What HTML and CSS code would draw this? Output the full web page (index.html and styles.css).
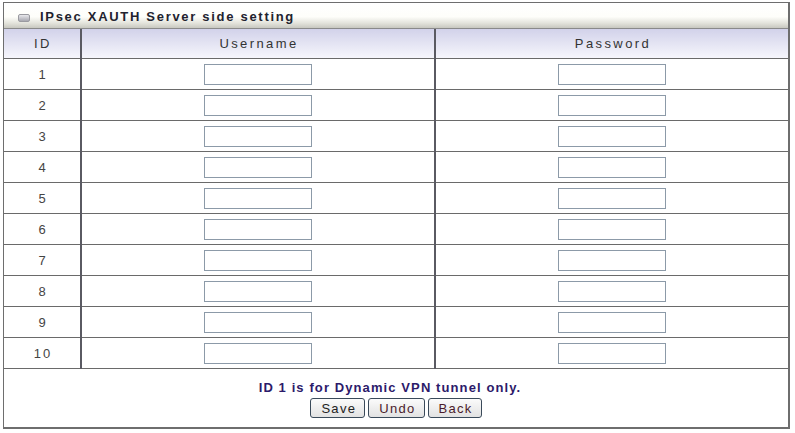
FILE: index.html
```html
<!DOCTYPE html>
<html>
<head>
<meta charset="utf-8">
<link rel="stylesheet" href="styles.css">
</head>
<body>
<div class="panel">
  <div class="title"><span class="ticon"></span>IPsec XAUTH Server side setting</div>
  <table class="grid">
    <tr class="head"><th class="cid">ID</th><th class="cuser">Username</th><th>Password</th></tr>
    <tr><td>1</td><td><input class="field" type="text"></td><td><input class="field" type="password"></td></tr>
    <tr><td>2</td><td><input class="field" type="text"></td><td><input class="field" type="password"></td></tr>
    <tr><td>3</td><td><input class="field" type="text"></td><td><input class="field" type="password"></td></tr>
    <tr><td>4</td><td><input class="field" type="text"></td><td><input class="field" type="password"></td></tr>
    <tr><td>5</td><td><input class="field" type="text"></td><td><input class="field" type="password"></td></tr>
    <tr><td>6</td><td><input class="field" type="text"></td><td><input class="field" type="password"></td></tr>
    <tr><td>7</td><td><input class="field" type="text"></td><td><input class="field" type="password"></td></tr>
    <tr><td>8</td><td><input class="field" type="text"></td><td><input class="field" type="password"></td></tr>
    <tr><td>9</td><td><input class="field" type="text"></td><td><input class="field" type="password"></td></tr>
    <tr><td>10</td><td><input class="field" type="text"></td><td><input class="field" type="password"></td></tr>
  </table>
  <div class="foot">
    <div class="note">ID 1 is for Dynamic VPN tunnel only.</div>
    <div class="btns">
      <button class="btn">Save</button><button class="btn red">Undo</button><button class="btn red">Back</button>
    </div>
  </div>
</div>
</body>
</html>
```
FILE: styles.css
```css
html, body { margin: 0; padding: 0; background: #fff; }
body { font-family: "Liberation Sans", Arial, sans-serif; font-size: 13px; color: #333; }
.panel {
  margin: 2px 0 0 3px;
  width: 784px;
  border: 1px solid #6e6e6e;
  border-right-width: 2px;
  border-bottom-width: 2px;
}
.title {
  height: 25px;
  line-height: 27px;
  padding-left: 36px;
  position: relative;
  font-weight: bold;
  letter-spacing: 1.7px;
  color: #22222e;
  background: linear-gradient(#ffffff 0%, #fefefa 55%, #e4e4dc 80%, #c8c8c0 100%);
  border-bottom: 1px solid #8a8a8a;
}
.ticon {
  position: absolute;
  left: 14px; top: 11px;
  width: 10px; height: 6px;
  border-radius: 2px;
  border: 1px solid #9a9aa0;
  background: linear-gradient(#e8e8ec, #a8a8b0);
}
.grid { width: 100%; border-collapse: collapse; }
.grid th, .grid td { text-align: center; padding: 0; }
.grid th {
  height: 29px;
  font-weight: normal;
  color: #333;
  font-size: 13px;
  letter-spacing: 2.4px;
  text-indent: 2px;
  background: linear-gradient(#d2d2ea, #f6f6fc);
  border-bottom: 1px solid #6a6a6a;
}
.grid td { height: 30px; border-bottom: 1px solid #6a6a6a; letter-spacing: 2px; text-indent: 2px; color: #444; }
.cid { width: 76px; }
.cuser { width: 352px; }
.grid th:nth-child(2), .grid td:nth-child(2) { border-left: 2px solid #5a5a62; border-right: 2px solid #5a5a62; }
.field {
  box-sizing: border-box;
  width: 108px; height: 21px;
  margin: 0 0 0 -2px; padding: 0;
  border: 1px solid #8c9aa8;
  background: #fff;
  vertical-align: middle;
}
.foot { height: 58px; text-align: center; }
.note {
  padding-top: 11px;
  margin-right: 12px;
  font-weight: bold;
  letter-spacing: 1.1px;
  color: #2c1a6a;
  line-height: 16px;
}
.btns { margin-top: 2px; font-size: 0; }
.btn {
  font-family: "Liberation Sans", Arial, sans-serif;
  font-size: 13px;
  letter-spacing: 1.3px;
  color: #222;
  height: 20px;
  padding: 0 8px 0 10px;
  margin: 0 1.5px;
  border: 1px solid #3a4a5a;
  border-radius: 3px;
  background: linear-gradient(#fbfbfb, #e2e2e2);
}
.btn.red { color: #4a1a2a; }
```
